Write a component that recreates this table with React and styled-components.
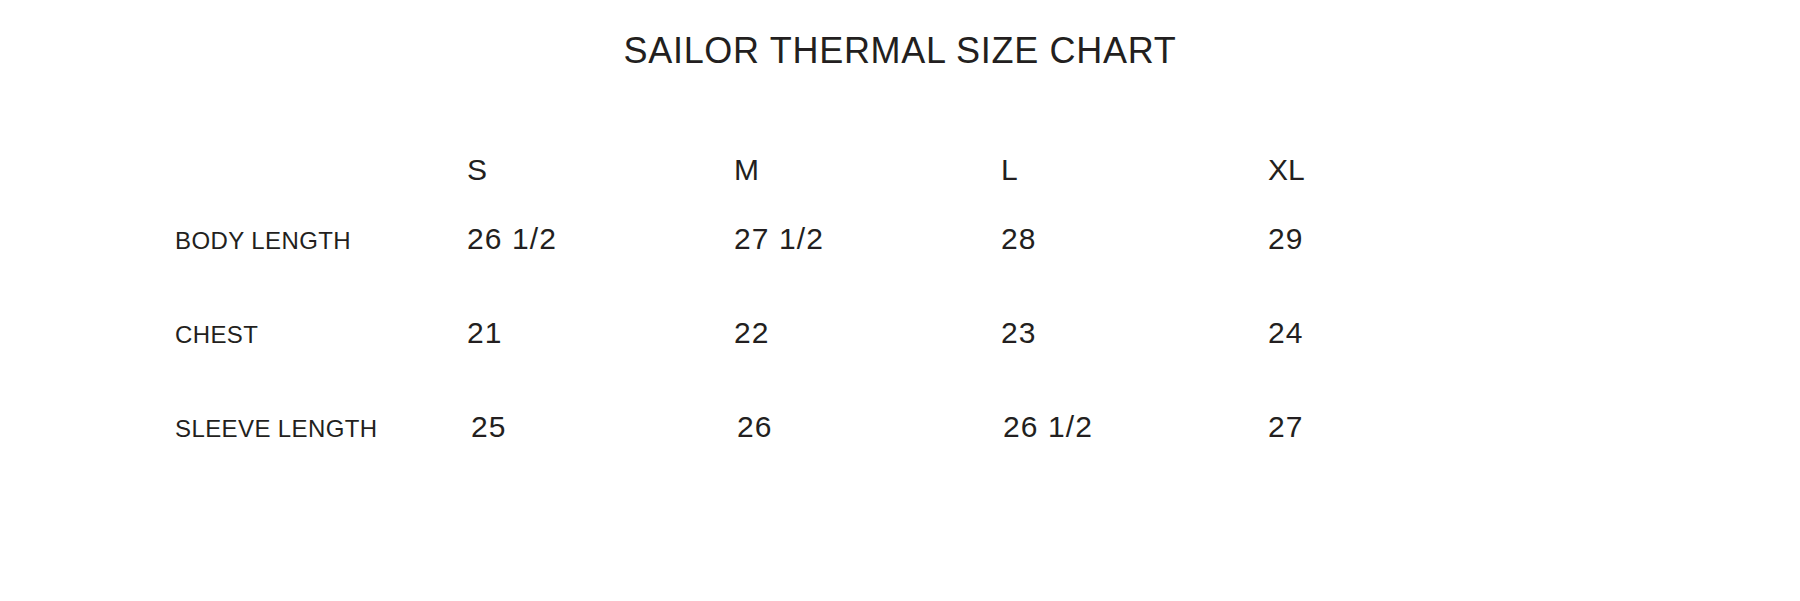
import React from 'react';
import styled, { createGlobalStyle } from 'styled-components';

const GlobalStyle = createGlobalStyle`
  html, body {
    margin: 0;
    padding: 0;
    background: #ffffff;
  }
  body {
    font-family: "Liberation Sans", Arial, Helvetica, sans-serif;
    color: #231f20;
  }
`;

const Page = styled.div`
  width: 1800px;
  height: 601px;
  box-sizing: border-box;
  padding-top: 33px;
  background: #ffffff;
  overflow: hidden;
`;

const Title = styled.h1`
  margin: 0;
  font-size: 36px;
  line-height: 36px;
  font-weight: 400;
  letter-spacing: 0.7px;
  text-align: center;
`;

const Table = styled.div`
  display: flex;
  flex-direction: column;
  gap: 62px;
  margin-top: 86px;
  padding-left: 175px;
`;

const Row = styled.div`
  display: grid;
  grid-template-columns: 292px repeat(4, 267px);
  align-items: baseline;
  margin-bottom: ${(p) => (p.$head ? '-23px' : '0')};
`;

const Label = styled.div`
  font-size: 24px;
  line-height: 30px;
  letter-spacing: 0.4px;
`;

const Cell = styled.div`
  font-size: 30px;
  line-height: 30px;
  letter-spacing: ${(p) => (p.$head ? '0' : '1.1px')};
  padding-left: ${(p) => p.$nudge || 0}px;
  white-space: pre;
`;

const sizes = ['S', 'M', 'L', 'XL'];

const rows = [
  { label: 'BODY LENGTH', values: ['26 1/2', '27 1/2', '28', '29'] },
  { label: 'CHEST', values: ['21', '22', '23', '24'] },
  { label: 'SLEEVE LENGTH', values: ['25', '26', '26 1/2', '27'], nudge: [4, 3, 2, 0] },
];

export default function App() {
  return (
    <Page>
      <GlobalStyle />
      <Title>SAILOR THERMAL SIZE CHART</Title>
      <Table>
        <Row $head>
          <Label />
          {sizes.map((s) => (
            <Cell $head key={s}>{s}</Cell>
          ))}
        </Row>
        {rows.map((r) => (
          <Row key={r.label}>
            <Label>{r.label}</Label>
            {r.values.map((v, i) => (
              <Cell key={i} $nudge={r.nudge ? r.nudge[i] : 0}>{v}</Cell>
            ))}
          </Row>
        ))}
      </Table>
    </Page>
  );
}
